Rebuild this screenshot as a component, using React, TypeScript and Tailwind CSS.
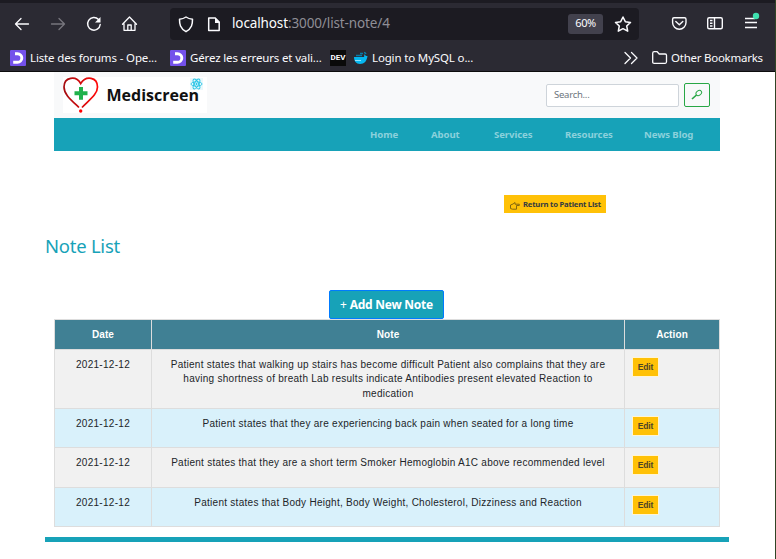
import React from "react";

const notes = [
  {
    lines: [
      "Patient states that walking up stairs has become difficult Patient also complains that they are",
      "having shortness of breath Lab results indicate Antibodies present elevated Reaction to",
      "medication",
    ],
    row: "h-[59px] bg-[#f1f1f1]",
  },
  { lines: ["Patient states that they are experiencing back pain when seated for a long time"], row: "h-[39px] bg-[#d9f1fb]" },
  { lines: ["Patient states that they are a short term Smoker Hemoglobin A1C above recommended level"], row: "h-[40px] bg-[#f1f1f1]" },
  { lines: ["Patient states that Body Height, Body Weight, Cholesterol, Dizziness and Reaction"], row: "h-[39px] bg-[#d9f1fb]" },
];

function ForumIcon() {
  return (
    <svg width="16" height="16" viewBox="0 0 16 16" className="shrink-0">
      <rect width="16" height="16" rx="1" fill="#7451eb" />
      <path d="M4 3.7h3.5a4.3 4.3 0 0 1 0 8.6H3.2" fill="none" stroke="#fff" strokeWidth="2.9" />
      <path d="M3 2h2v4H3z" fill="#7451eb" />
    </svg>
  );
}

function BrowserChrome() {
  const line = { fill: "none", stroke: "#fbfbfe", strokeWidth: 1.3, strokeLinecap: "round", strokeLinejoin: "round" } as const;
  return (
    <header className="h-[72px] border-t-[3px] border-b border-t-[#1c1b22] border-b-[#0c0c0d] bg-[#2b2a33] font-['Noto_Sans',sans-serif] text-[#fbfbfe]">
      <div className="flex h-[41px] items-center">
        <svg width="170" height="41" viewBox="0 3 170 41" className="shrink-0">
          <path {...line} d="M28.500 24H15.500M21 18.500 15.500 24l5.500 5.500" />
          <path {...line} stroke="#77767e" d="M51.500 24h13M59 18.500l5.500 5.500L59 29.500" />
          <path {...line} strokeWidth="1.500" d="M98.500 19.500A6.300 6.300 0 1 0 100.200 24.500" />
          <path d="M100.500 17v5.500H95z" fill="#fbfbfe" />
          <path {...line} d="M122.500 24.300 129.500 17l7 7.300M124 23.500V30.300h11V23.500M127.800 30v-5h3.400v5" />
        </svg>
        <div className="flex h-8 w-[469px] items-center rounded bg-[#1c1b22]">
          <svg width="62" height="32" viewBox="170 7 62 32" className="shrink-0">
            <path {...line} strokeWidth="1.500" d="M186 16c2 1.400 4.100 2 6.500 2.200 0 5-.5 9-6.500 12.500-6-3.500-6.500-7.500-6.500-12.500 2.400-.2 4.500-.8 6.500-2.200z" />
            <path {...line} strokeWidth="1.500" d="M208.700 17h6.500l4 4v8.500h-10.500z" />
            <path d="M215 16.500V22h5z" fill="#fbfbfe" />
          </svg>
          <span className="text-[13.500px] tracking-[-0.120px] whitespace-nowrap">localhost<span className="text-[#8f8e96]">:3000/list-note/4</span></span>
          <span className="ml-auto flex h-5 w-[35px] items-center justify-center rounded-[3px] bg-[#42414d] text-[11px] tracking-[-0.400px]">60%</span>
          <svg width="36" height="32" viewBox="603 7 36 32" className="shrink-0">
            <path {...line} strokeWidth="1.500" d="m623 16 2.300 4.700 5.200.7-3.800 3.600 1 5.200-4.700-2.500-4.700 2.500 1-5.200-3.800-3.600 5.200-.7z" />
          </svg>
        </div>
        <svg width="137" height="41" viewBox="639 3 137 41" className="shrink-0">
          <path {...line} strokeWidth="1.400" d="M674 17.700h10.500a1.500 1.500 0 0 1 1.500 1.500v3.300a6.700 6.700 0 0 1-13.400 0v-3.300a1.500 1.500 0 0 1 1.400-1.500zM675.800 21.500l3.500 3.300 3.500-3.300" />
          <rect {...line} strokeWidth="1.400" x="707.700" y="17.700" width="14.600" height="11" rx="1.500" />
          <path {...line} strokeWidth="1.400" strokeLinecap="butt" d="M714.500 18v10.500M710 20.500h2.500M710 23.200h2.500M710 26h2.500" />
          <path {...line} strokeLinecap="butt" d="M745 18.500h10M745 22.500h12M745 27.500h12" />
          <circle cx="756" cy="16" r="3.200" fill="#3fe1b0" />
        </svg>
      </div>
      <div className="flex h-[27px] items-center pl-[10px] text-[11.500px] tracking-[-0.150px] whitespace-nowrap">
        <div className="flex w-[160px] shrink-0 items-center gap-1"><ForumIcon /><span>Liste des forums - Ope...</span></div>
        <div className="flex w-[160px] shrink-0 items-center gap-1"><ForumIcon /><span>Gérez les erreurs et vali...</span></div>
        <div className="flex h-4 w-4 items-center justify-center bg-[#0a0a0a] font-['Roboto',sans-serif] text-[8px] font-bold tracking-normal">DEV</div>
        <svg width="14" height="14" viewBox="0 0 14 14" className="ml-2 shrink-0">
          <path d="M0 6h10c.5-1 .3-2-.2-2.800C11 4 12 5 13.500 5c-.7 5-3 8-7.500 8-4 0-6-3-6-7z" fill="#06b6ef" />
          <path d="M2 4.500h6M6 2.500h3M10 1.500c1 0 1.500.5 2 1.500" stroke="#087ca8" strokeWidth="1.500" fill="none" />
          <path d="M1 9.500h6" stroke="#8be5ff" />
        </svg>
        <span className="ml-1">Login to MySQL o...</span>
        <svg width="58" height="26" viewBox="613 44 58 26" className="ml-auto shrink-0">
          <path {...line} d="m625 51.500 5.500 5.500-5.500 5.500M631.500 51.500l5.500 5.500-5.500 5.500" />
          <path {...line} d="M652.700 61.500v-9.300q0-1.500 1.500-1.500h3l2 2.300h6q1.300 0 1.300 1.300v6.500q0 1.500-1.300 1.500h-11q-1.500 0-1.500-.8z" />
        </svg>
        <span className="w-[92px] mr-[13px] tracking-[-0.250px]">Other Bookmarks</span>
      </div>
    </header>
  );
}

function Logo() {
  return (
    <div className="ml-[9px] flex h-9 w-[144px] bg-white">
      <svg width="144" height="36" viewBox="63 77 144 36">
        <defs>
          <linearGradient id="heart"><stop stopColor="#a50c10" /><stop offset="1" stopColor="#ff0808" /></linearGradient>
        </defs>
        <path d="M79 107.500C70 99 64 94 64 87c0-10 12-12 16.700-3.500C86 75 97.500 77 97.500 87c0 7-7 12-15.500 20.500" fill="none" stroke="url(#heart)" strokeWidth="1.700" />
        <circle cx="80.700" cy="111" r="1.700" fill="#f00" />
        <path d="M79 87h4v4.300h4.500v4H83v4.500h-4v-4.500h-4.500v-4H79z" fill="#20b14b" />
        <rect x="190" y="78" width="13" height="12" fill="#e9f8fb" />
        <g fill="none" stroke="#22c3e6" strokeWidth=".9">
          <ellipse cx="196.500" cy="84" rx="5.500" ry="2.200" />
          <ellipse cx="196.500" cy="84" rx="5.500" ry="2.200" transform="rotate(60 196.500 84)" />
          <ellipse cx="196.500" cy="84" rx="5.500" ry="2.200" transform="rotate(120 196.500 84)" />
        </g>
        <circle cx="196.500" cy="84" r="1" fill="#22c3e6" />
        <text x="106.500" y="100.500" textLength="92.500" lengthAdjust="spacingAndGlyphs" fontFamily="Open Sans, sans-serif" fontSize="16" fontWeight="700" fill="#111">Mediscreen</text>
      </svg>
    </div>
  );
}

export default function App() {
  return (
    <div className="h-[559px] w-[776px] overflow-hidden border-r border-[#304525] bg-white">
      <div className="w-[776px]"><BrowserChrome /></div>
      <main className="font-['Noto_Sans',sans-serif]">
        <section className="ml-[54px] w-[666px]">
          <div className="flex h-[46px] items-center bg-[#f8f9fa]">
            <Logo />
            <div className="ml-auto flex h-[23px] w-[133px] items-center rounded-[2px] border border-[#ced4da] bg-white pt-px pl-[7px] text-[9.500px] tracking-[-0.250px] text-[#6c757d]">Search...</div>
            <button className="mr-[10px] ml-[5px] flex h-6 w-[26px] items-center justify-center rounded-[2px] border border-[#28a745]">
              <svg width="12" height="12" viewBox="0 0 12 12" fill="none" stroke="#28a745">
                <ellipse cx="7.800" cy="4" rx="3" ry="2.300" transform="rotate(-35 7.800 4)" /><path d="m5.500 6-4.500 4" strokeWidth="1.600" />
              </svg>
            </button>
          </div>
          <nav className="flex h-[33px] items-center bg-[#17a2b8] pt-px pl-[316px] text-[9.600px] font-bold tracking-[-0.100px] whitespace-nowrap text-[#8bd1dc]">
            <span className="w-[61px]">Home</span>
            <span className="w-[63px]">About</span>
            <span className="w-[71px]">Services</span>
            <span className="w-[79px]">Resources</span>
            <span>News Blog</span>
          </nav>
        </section>
        <div className="mt-11 ml-[504px]">
          <button className="flex h-[18px] w-[102px] items-center bg-[#ffc107] pl-[6px] text-[7.700px] font-bold whitespace-nowrap text-[#343a40]">
            <svg width="10" height="8" viewBox="0 0 10 8" fill="none" stroke="#7a6010" strokeWidth=".9" className="mt-[3px] mr-[3px]">
              <path d="M.5 3 3 2l2-1.500v1.700h4.300v1.300H6.500v3.700h-4L.5 6.500z" />
            </svg>
            <span className="mt-[2px] tracking-[-0.200px]">Return to Patient List</span>
          </button>
        </div>
        <h1 className="mt-5 ml-[45px] h-[26px] text-[18.500px] leading-[26px] tracking-[-0.250px] text-[#17a2b8]">Note List</h1>
        <div className="mt-[31px] ml-[329px]">
          <button className="flex h-[29px] w-[115px] items-center justify-center rounded-[2px] border border-[#007bff] bg-[#17a2b8] text-[12px] font-bold tracking-[-0.250px] whitespace-nowrap text-white"><span className="mr-[3px] font-normal">+</span>Add New Note</button>
        </div>
        <table className="ml-[54px] w-[666px] table-fixed border-separate border-spacing-0 border-t border-l border-[#dddddd] font-['Liberation_Sans',Arial,sans-serif] text-[10px] text-[#212529]">
          <colgroup><col className="w-[97px]" /><col className="w-[473px]" /><col className="w-[95px]" /></colgroup>
          <thead>
            <tr className="h-[30px] bg-[#408094] text-white">
              {["Date", "Note", "Action"].map((title) => (
                <th key={title} className="border-r border-b border-[#dddddd] p-0 tracking-[0.100px]">{title}</th>
              ))}
            </tr>
          </thead>
          <tbody>
            {notes.map((note) => (
              <tr key={note.lines[0]} className={note.row}>
                <td className="border-r border-b border-[#dddddd] p-0 pt-2 text-center align-top leading-[14.400px] tracking-[0.300px]">2021-12-12</td>
                <td className="border-r border-b border-[#dddddd] p-0 pt-2 text-center align-top leading-[14.400px] tracking-[0.270px] whitespace-nowrap">
                  {note.lines.map((text) => <div key={text}>{text}</div>)}
                </td>
                <td className="border-r border-b border-[#dddddd] p-0 pt-[7px] pl-[7px] align-top">
                  <button className="flex h-5 w-[27px] items-center justify-center border border-[#fff5d5] bg-[#ffc107] text-[8.500px] font-bold tracking-[-0.150px] text-[#4b4528]">Edit</button>
                </td>
              </tr>
            ))}
          </tbody>
        </table>
        <div className="mt-[10px] ml-[45px] h-[5px] w-[684px] bg-[#17a2b8]" />
      </main>
    </div>
  );
}
